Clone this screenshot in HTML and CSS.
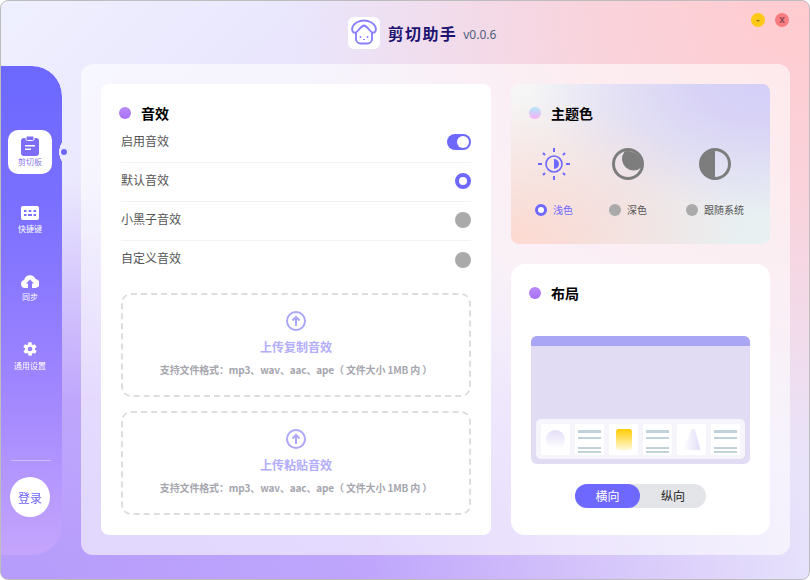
FILE: index.html
```html
<!DOCTYPE html>
<html lang="zh">
<head>
<meta charset="utf-8">
<title>剪切助手</title>
<link rel="stylesheet" href="styles.css">
</head>
<body>
<div class="app">
  <header class="titlebar">
    <div class="logo">
      <svg width="32" height="32" viewBox="0 0 32 32" fill="none" stroke="#8a80ff" stroke-width="1.9" stroke-linejoin="round">
        <path d="M8 16v6a4.500 4.500 0 0 0 4.500 4.500h7A4.500 4.500 0 0 0 24 22v-6"/>
        <path d="M16 3.500c-5 0-10 2.500-11.500 6.500-.8 2.500-.3 5 1.500 5.500 1.500.5 3-.5 4.500-2.500 1.600-2 3.500-4 5.500-4.500 2 .5 3.900 2.500 5.500 4.500 1.500 2 3 3 4.500 2.500 1.800-.5 2.300-3 1.500-5.500C26 6 21 3.500 16 3.500z"/>
        <circle cx="12.500" cy="20" r="1" fill="#8a80ff" stroke="none"/><circle cx="19.500" cy="20" r="1" fill="#8a80ff" stroke="none"/>
        <path d="M15 22.500h2" stroke-width="1.200"/>
      </svg>
    </div>
    <span class="app-name">剪切助手</span>
    <span class="version">v0.0.6</span>
    <div class="win-controls">
      <span class="win-btn win-min">-</span>
      <span class="win-btn win-close">x</span>
    </div>
  </header>
  <div class="content">
    <div class="side-wrap">
      <nav class="sidebar">
        <a class="nav-item active">
          <svg width="18" height="20" viewBox="0 0 18 20"><path d="M3 2h12a3 3 0 0 1 3 3v12a3 3 0 0 1-3 3H3a3 3 0 0 1-3-3V5a3 3 0 0 1 3-3z" fill="#7c6cf6"/><rect x="5" y="0" width="8" height="4.500" rx="1.500" fill="#7c6cf6" stroke="#fff" stroke-width="1"/><path d="M4 9h10v1.500H4zM4 12.500h6V14H4z" fill="#fff"/></svg>
          <span>剪切板</span>
        </a>
        <a class="nav-item">
          <svg width="18" height="14" viewBox="0 0 18 14"><rect width="18" height="14" rx="2" fill="#fff"/><path d="M3 4h2.500v2H3zM7.700 4h2.500v2H7.700zM12.500 4H15v2h-2.500zM3 8h2.500v2H3zM12.500 8H15v2h-2.500zM7 8h4v2H7z" fill="#7b6fff"/></svg>
          <span>快捷键</span>
        </a>
        <a class="nav-item">
          <svg width="18" height="14" viewBox="0 0 18 14"><path d="M4 14a4 4 0 0 1-.8-7.900A5.800 5.800 0 0 1 14.400 5 4.500 4.500 0 0 1 14 14h-3V9.500h2L9 5.500l-4 4h2V14z" fill="#fff"/></svg>
          <span>同步</span>
        </a>
        <a class="nav-item">
          <svg width="16" height="16" viewBox="0 0 24 24"><path fill="#fff" d="M19.400 13c.1-.3.100-.7.100-1s0-.7-.1-1l2.100-1.600c.2-.2.200-.4.100-.6l-2-3.500c-.1-.2-.4-.3-.6-.2l-2.500 1c-.5-.4-1.100-.7-1.700-1l-.4-2.600c0-.3-.2-.5-.5-.5h-4c-.3 0-.5.200-.5.500l-.4 2.600c-.6.300-1.200.6-1.700 1l-2.500-1c-.2-.1-.5 0-.6.200l-2 3.500c-.1.200-.1.400.1.600L4.600 11c-.1.300-.1.700-.1 1s0 .7.1 1l-2.100 1.600c-.2.200-.2.400-.1.600l2 3.500c.1.200.4.300.6.200l2.500-1c.5.400 1.100.7 1.700 1l.4 2.600c0 .3.200.5.500.5h4c.3 0 .5-.2.500-.5l.4-2.600c.6-.3 1.200-.6 1.700-1l2.500 1c.2.100.5 0 .6-.2l2-3.500c.1-.2.100-.4-.1-.6zM12 15.500a3.500 3.500 0 1 1 0-7 3.500 3.500 0 0 1 0 7z"/></svg>
          <span>通用设置</span>
        </a>
        <div class="side-foot">
          <div class="side-line"></div>
          <button class="login">登录</button>
        </div>
      </nav>
      <i class="side-dot"></i>
    </div>
    <main class="panel">
      <section class="card sound">
        <h2 class="card-title"><i class="dot dot-purple"></i>音效</h2>
        <div class="row"><span>启用音效</span><i class="switch"></i></div>
        <div class="row"><span>默认音效</span><i class="radio on"></i></div>
        <div class="row"><span>小黑子音效</span><i class="radio"></i></div>
        <div class="row last"><span>自定义音效</span><i class="radio"></i></div>
        <div class="upload first">
          <svg width="20" height="20" viewBox="0 0 20 20" fill="none" stroke="#aca6fb" stroke-width="2"><circle cx="10" cy="10" r="9"/><path d="M10 15V6M6.500 9.500 10 6l3.500 3.500"/></svg>
          <b class="upload-title">上传复制音效</b>
          <p class="upload-note">支持文件格式：mp3、wav、aac、ape（ 文件大小 1MB 内 ）</p>
        </div>
        <div class="upload">
          <svg width="20" height="20" viewBox="0 0 20 20" fill="none" stroke="#aca6fb" stroke-width="2"><circle cx="10" cy="10" r="9"/><path d="M10 15V6M6.500 9.500 10 6l3.500 3.500"/></svg>
          <b class="upload-title">上传粘贴音效</b>
          <p class="upload-note">支持文件格式：mp3、wav、aac、ape（ 文件大小 1MB 内 ）</p>
        </div>
      </section>
      <div class="right">
        <section class="card theme">
          <h2 class="card-title"><i class="dot dot-rainbow"></i>主题色</h2>
          <div class="theme-opts">
            <div class="theme-opt selected">
              <svg width="32" height="32" viewBox="0 0 32 32" fill="none" stroke="#6f68ff" stroke-width="1.600"><circle cx="16" cy="16" r="8"/><path d="M16 11a5 5 0 0 1 0 10z" fill="#6f68ff" stroke="none"/><path d="M16 0v4M16 28v4M0 16h4M28 16h4M5 5l2 2M25 25l2 2M5 27l2-2M25 7l2-2" stroke-width="2"/></svg>
              <div class="theme-label"><i class="radio small on"></i>浅色</div>
            </div>
            <div class="theme-opt">
              <svg width="32" height="32" viewBox="0 0 32 32"><circle cx="16" cy="16" r="14.500" fill="none" stroke="#7d7d7d" stroke-width="3"/><path d="M11.500 3.500 12 4.500A11.500 11.500 0 0 0 29 19.700L30 19A14.500 14.500 0 0 0 11.500 3.500z" fill="#7d7d7d"/></svg>
              <div class="theme-label"><i class="radio small"></i>深色</div>
            </div>
            <div class="theme-opt sys">
              <svg width="32" height="32" viewBox="0 0 32 32"><circle cx="16" cy="16" r="14.500" fill="none" stroke="#7d7d7d" stroke-width="3"/><path d="M16 1.500a14.500 14.500 0 0 0 0 29z" fill="#7d7d7d"/></svg>
              <div class="theme-label"><i class="radio small"></i>跟随系统</div>
            </div>
          </div>
        </section>
        <section class="card layout">
          <h2 class="card-title"><i class="dot dot-purple"></i>布局</h2>
          <div class="preview">
            <div class="preview-head"></div>
            <div class="preview-strip">
              <div class="thumb"><i class="t-circle"></i></div>
              <div class="thumb lines"><i></i><i></i><i></i><i></i></div>
              <div class="thumb"><i class="t-yellow"></i></div>
              <div class="thumb lines"><i></i><i></i><i></i><i></i></div>
              <div class="thumb"><i class="t-tri"></i></div>
              <div class="thumb lines"><i></i><i></i><i></i><i></i></div>
            </div>
          </div>
          <div class="seg">
            <span class="seg-item active">横向</span>
            <span class="seg-item">纵向</span>
          </div>
        </section>
      </div>
    </main>
  </div>
</div>
</body>
</html>
```
FILE: styles.css
```css
* { box-sizing: border-box; margin: 0; padding: 0; }
html, body { width: 810px; height: 580px; overflow: hidden; background: #fff; }
body { font-family: "Noto Sans CJK SC", "Noto Sans", sans-serif; color: #555; }
i { display: block; font-style: normal; }

.app {
  width: 810px; height: 580px;
  border: 1px solid #bdbdbd;
  border-radius: 8px;
  overflow: hidden;
  display: flex; flex-direction: column;
  background:
    radial-gradient(ellipse 520px 460px at 100% 0%, #ffcbcf 0%, rgba(255,203,207,.7) 40%, rgba(255,203,207,0) 100%),
    radial-gradient(ellipse 820px 400px at 0% 100%, #b69cfb 0%, #bfa6fc 45%, rgba(191,166,252,0) 100%),
    linear-gradient(135deg, #eff0ff 0%, #e9e6fd 25%, #efe3f4 60%, #e7e3fc 100%);
}

.titlebar {
  height: 63px; flex: none;
  display: flex; align-items: center; justify-content: center;
  padding-left: 36px;
  position: relative;
}
.logo {
  width: 32px; height: 32px; margin-left: -2px;
  background: #fff; border-radius: 6px;
}
.logo svg { display: block; }
.app-name {
  margin-left: 8px; font-size: 16px; font-weight: 700;
  letter-spacing: 1.400px; color: #1c1470;
}
.version { margin-left: 6px; font-size: 12px; color: #4f5f80; font-family: "Noto Sans", sans-serif; padding-top: 3px; }
.win-controls { position: absolute; right: 20px; top: 12px; display: flex; gap: 10px; }
.win-btn {
  width: 14px; height: 14px; border-radius: 50%;
  font: 700 10px/13px "Liberation Sans", sans-serif; text-align: center;
}
.win-min { background: #fdc917; color: #7a6410; }
.win-close { background: #fb7c80; color: #8a4a55; }

.content { flex: 1; display: flex; min-height: 0; }

.side-wrap { width: 80px; flex: none; position: relative; padding-top: 2px; }
.sidebar {
  width: 61px; height: 489px;
  border-radius: 0 30px 30px 0;
  background: linear-gradient(180deg, #6c68ff 0%, #7b70ff 30%, #9f85ff 65%, #c5a5fc 100%);
  -webkit-mask: radial-gradient(ellipse 12px 15px at 70px 86px, transparent 97%, #000 100%);
  mask: radial-gradient(ellipse 12px 15px at 70px 86px, transparent 97%, #000 100%);
  display: flex; flex-direction: column; align-items: center;
  padding-top: 64px; padding-right: 3px;
}
.side-dot {
  position: absolute; left: 60px; top: 85px;
  width: 6px; height: 6px; border-radius: 50%; background: #6f68ff;
}
.nav-item {
  width: 44px; height: 44px; margin-bottom: 24px;
  display: flex; flex-direction: column; align-items: center; justify-content: center; gap: 3px;
  font-size: 8px; line-height: 12px; color: #fff;
}
.nav-item svg { display: block; }
.nav-item.active { background: #fff; border-radius: 10px; color: #8d7be8; gap: 0; }
.side-foot { margin-top: auto; padding-bottom: 38px; display: flex; flex-direction: column; align-items: center; gap: 16px; }
.side-line { width: 40px; height: 1px; background: rgba(255,255,255,.4); margin-left: 2px; }
.login {
  width: 40px; height: 40px; border: 0; border-radius: 50%; background: #fff;
  font: 12px "Noto Sans CJK SC", sans-serif; color: #6c63ff;
}

.panel {
  width: 709px; height: 491px; padding: 20px; border-radius: 12px;
  background: rgba(255,255,255,.58);
  display: flex; gap: 20px;
}
.card { background: #fff; border-radius: 8px; }
.card-title {
  display: flex; align-items: center; gap: 10px;
  font-size: 14px; line-height: 20px; font-weight: 700; color: #000;
}
.dot { width: 12px; height: 12px; border-radius: 50%; }
.dot-purple { background: linear-gradient(180deg, #b98bf6, #a86ff6); }
.dot-rainbow { background: linear-gradient(180deg, #a9e8fb, #ffb0f4); }

.sound { width: 390px; height: 451px; padding: 19px 20px 0; }
.sound .card-title { margin-left: -2px; margin-bottom: 1px; }
.row {
  height: 39px; padding-bottom: 2px; display: flex; align-items: center; justify-content: space-between;
  border-bottom: 1px solid #f1f2f7; font-size: 12px; color: #555;
}
.row span { padding-bottom: 4px; }
.row.last { border-bottom: 0; }
.switch { width: 24px; height: 16px; border-radius: 8px; background: #6f68ff; position: relative; }
.switch::after { content: ""; position: absolute; right: 2px; top: 2px; width: 12px; height: 12px; border-radius: 50%; background: #fff; }
.radio { width: 16px; height: 16px; border-radius: 50%; background: #aaa; }
.radio.on { background: #fff; border: 4.500px solid #6f68ff; }
.radio.small { width: 12px; height: 12px; }
.radio.small.on { border-width: 3.500px; }

.upload {
  height: 104px; margin-top: 14px; padding-top: 16px;
  border: 2px dashed #ddd; border-radius: 10px;
  display: flex; flex-direction: column; align-items: center;
}
.upload.first { margin-top: 13px; }
.upload svg { display: block; }
.upload-title { margin-top: 7px; font-size: 12px; line-height: 18px; font-weight: 700; color: #b3adfb; }
.upload-note { margin-top: 6px; font-size: 10px; line-height: 15px; font-weight: 700; color: #a6a6ae; white-space: nowrap; letter-spacing: -.15px; }

.right { width: 259px; display: flex; flex-direction: column; gap: 20px; }
.theme {
  height: 160px; padding: 19px 18px 0;
  background:
    radial-gradient(ellipse 230px 150px at 0% 100%, #fdd9d0 0%, rgba(253,217,208,0) 100%),
    radial-gradient(ellipse 240px 130px at 100% 0%, #d3cff8 0%, #d8d3f6 30%, rgba(216,211,246,0) 100%),
    linear-gradient(135deg, #f7f7f7 0%, #eaeaf0 50%, #e8f1f2 100%);
}
.theme-opts { display: flex; gap: 36px; margin-top: 25px; padding-left: 6px; }
.theme-opt { display: flex; flex-direction: column; align-items: center; gap: 23px; width: 38px; }
.theme-opt svg { display: block; }
.theme-opt.sys { width: 58px; margin-left: 3px; }
.theme-label { display: flex; align-items: center; gap: 6px; font-size: 10px; line-height: 14px; color: #555; white-space: nowrap; }
.theme-opt.selected .theme-label { color: #6f68ff; }

.layout { height: 271px; padding: 19px 20px 0 18px; border-radius: 14px; display: flex; flex-direction: column; }
.preview {
  width: 219px; height: 128px; margin: 33px 0 0 2px;
  background: #e1dcf3; border-radius: 6px; overflow: hidden;
  display: flex; flex-direction: column; justify-content: space-between;
}
.preview-head { height: 10px; background: #a9a6f6; }
.preview-strip {
  margin: 0 5px 5px; height: 40px; padding: 5px; border-radius: 5px;
  background: rgba(255,255,255,.7);
  display: flex; justify-content: space-between;
}
.thumb { width: 29px; height: 31px; background: #fff; border-radius: 2px; display: flex; align-items: center; justify-content: center; }
.thumb.lines { flex-direction: column; justify-content: flex-start; padding: 6px 3px 0; }
.thumb.lines i { width: 100%; height: 2px; background: #c2d2da; }
.thumb.lines i:nth-child(1) { height: 3px; }
.thumb.lines i:nth-child(2) { margin-top: 4px; }
.thumb.lines i:nth-child(3) { margin-top: 8px; }
.thumb.lines i:nth-child(4) { margin-top: 2px; }
.t-circle { width: 19px; height: 19px; border-radius: 50%; background: linear-gradient(180deg, #e4def8, #fff); }
.t-yellow { width: 16px; height: 21px; border-radius: 3px; background: linear-gradient(180deg, #ffcd00, #fff8dc); }
.t-tri { width: 18px; height: 21px; background: linear-gradient(90deg, #fff, #e2dcf8); clip-path: polygon(50% 0, 68% 0, 100% 100%, 0 100%); }

.seg {
  width: 131px; height: 24px; margin: 20px 0 0 46px; border-radius: 12px;
  background: #e4e5e8; display: flex;
}
.seg-item { flex: 1; text-align: center; font-size: 12px; line-height: 24px; color: #222; }
.seg-item.active { flex: none; width: 65px; background: #6f68ff; border-radius: 12px; color: #fff; }
```
